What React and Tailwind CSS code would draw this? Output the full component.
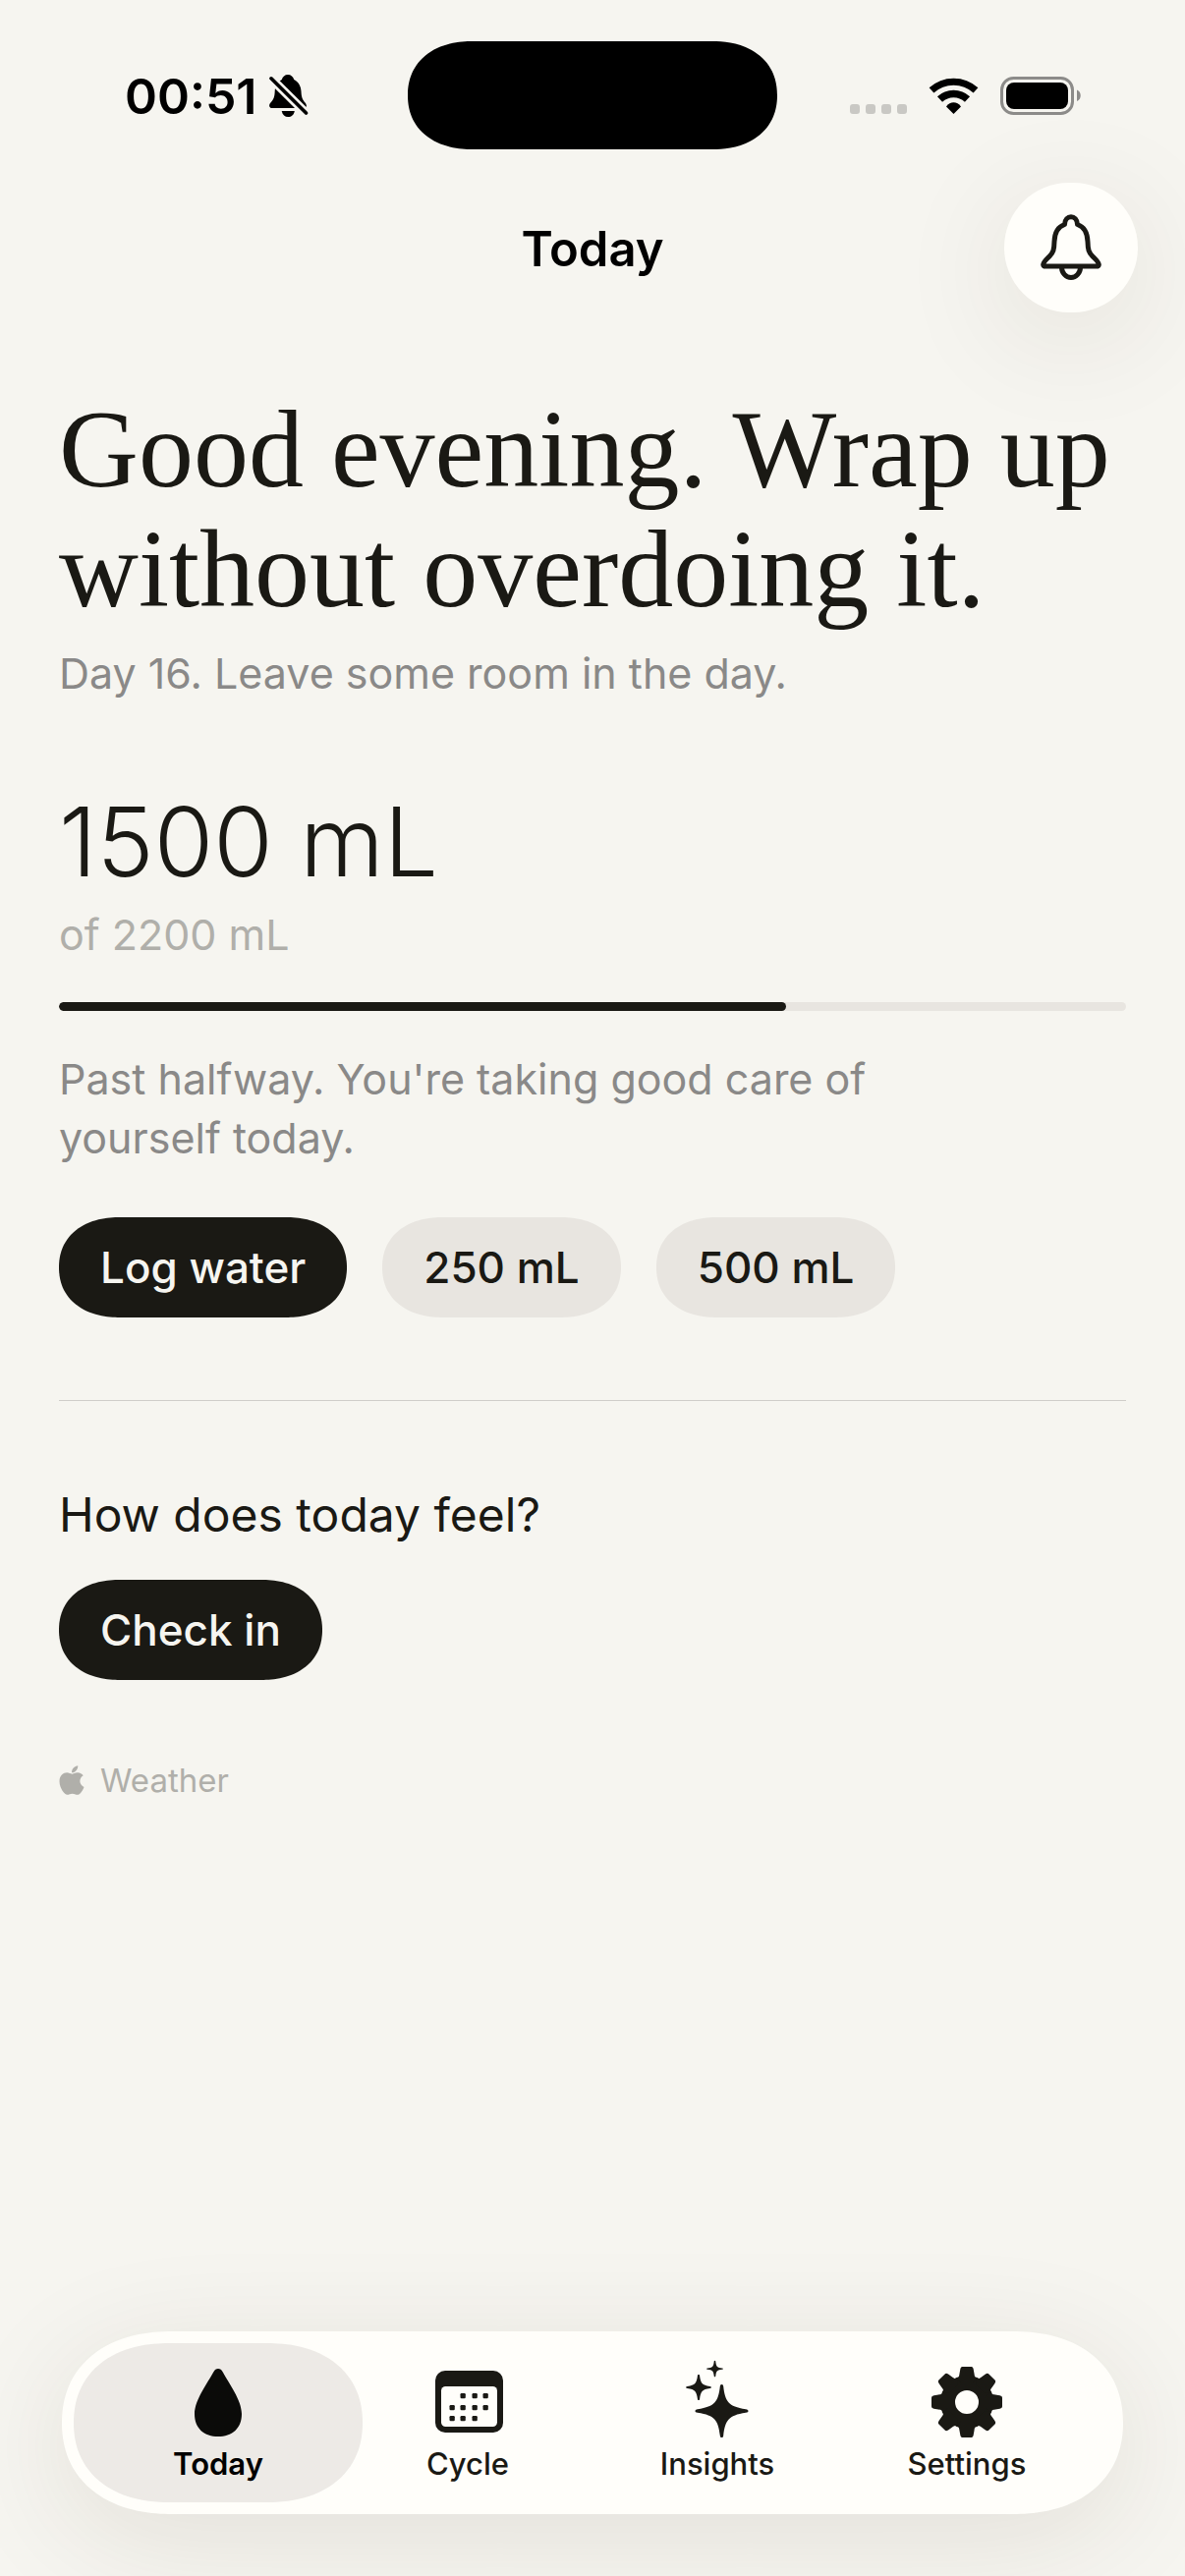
"use client";

import { useState } from "react";
import { FaApple } from "react-icons/fa";

const GOAL = 2200;

function BellSlashIcon() {
  return (
    <svg viewBox="0 0 40 44" className="h-11 w-10" aria-hidden="true">
      <path
        d="M19 0C22 0 24.5 2 25.2 5C30 7.500 32.300 12 32.500 17C32.700 23 34 25.500 36.500 28.500C38.500 31 38.500 34 35.500 34H3C0 34 -0.800 31 1.200 28.800C4.500 25 5.500 23 5.700 17C6 11 8.500 7.500 12.800 5C13.500 2 16 0 19 0Z"
        fill="#000"
      />
      <path d="M12.700 37H25.800C25 41 22.500 43 19.200 43C16 43 13.500 41 12.700 37Z" fill="#000" />
      <path d="M-2 0L42 43.500" stroke="#f6f5f0" strokeWidth="9" />
      <path d="M2 3.800L37.500 39" stroke="#000" strokeWidth="3.600" strokeLinecap="round" />
    </svg>
  );
}

function WifiIcon() {
  return (
    <svg viewBox="0 0 51 37" className="h-[37px] w-[51px]" fill="none" stroke="#000" aria-hidden="true">
      <path d="M3 12.900A33.300 33.300 0 0 1 48 12.900" strokeWidth="7" />
      <path d="M11.500 22A20.500 20.500 0 0 1 39.500 22" strokeWidth="7.500" />
      <path d="M25.500 37L18 29.400C22 24 29 24 33 29.400Z" fill="#000" stroke="none" />
    </svg>
  );
}

function BatteryIcon() {
  return (
    <svg viewBox="0 0 83 39" className="h-[39px] w-[83px]" aria-hidden="true">
      <rect x="1.500" y="1.500" width="72" height="36" rx="12" fill="none" stroke="#8c8b89" strokeWidth="3" />
      <rect x="6" y="6" width="63" height="27" rx="8" fill="#000" />
      <path d="M78 13.500C83 15.500 83 23 78 25Z" fill="#8c8b89" />
    </svg>
  );
}

function BellIcon() {
  return (
    <svg
      viewBox="0 0 64 70"
      className="h-[70px] w-16"
      fill="none"
      stroke="#1a1914"
      strokeWidth="5"
      strokeLinejoin="round"
      aria-hidden="true"
    >
      <path d="M25.500 11.500C25.800 1.200 38.200 1.200 38.500 11.500C46 14 48.700 20.500 49 29C49.200 37 50 40 54 44C57 47 60 49.500 60.300 52.300C60.400 53.500 59.500 54 58 54H6C4.500 54 3.600 53.500 3.700 52.300C4 49.500 7 47 10 44C14 40 14.800 37 15 29C15.300 20.500 18 14 25.500 11.500Z" />
      <path d="M22.500 55A9.500 10.500 0 0 0 41.500 55" />
    </svg>
  );
}

function DropIcon() {
  return (
    <svg viewBox="0 0 72 80" className="h-20 w-[72px]" aria-hidden="true">
      <path
        d="M36 9C38 9 39.500 10 40.500 12C47 24 60 41 60 55C60 70 50 78 36 78C22 78 12 70 12 55C12 41 25 24 31.500 12C32.500 10 34 9 36 9Z"
        fill="#0b0b09"
      />
    </svg>
  );
}

function CalendarIcon() {
  const dots = [
    [31, 36], [43, 36], [54, 36],
    [20, 48], [31, 48], [43, 48], [54, 48],
    [20, 59], [31, 59], [43, 59],
  ];
  return (
    <svg viewBox="0 0 72 80" className="h-20 w-[72px]" aria-hidden="true">
      <rect x="3" y="11" width="69" height="63" rx="10" fill="#1a1914" />
      <rect x="9" y="27" width="57" height="41" rx="4.500" fill="#fffefa" />
      {dots.map(([x, y]) => (
        <rect key={`${x}-${y}`} x={x - 2.5} y={y - 2} width="5.300" height="5.300" rx="1.200" fill="#1a1914" />
      ))}
    </svg>
  );
}

function SparklesIcon() {
  return (
    <svg viewBox="0 0 72 80" className="h-20 w-[72px]" fill="#1a1914" aria-hidden="true">
      <path d="M40.500 25C41.700 25 42 25.800 42.200 27C44 42 47 47.500 65 50.200C66.800 50.500 67.500 51 67.500 52C67.500 53 66.800 53.500 65 53.800C47 56.500 44 62 42.200 77C42 78.500 41.700 79 40.500 79C39.300 79 39 78.500 38.800 77C37 62 34 56.500 16 53.800C14.200 53.500 13.500 53 13.500 52C13.500 51 14.200 50.500 16 50.200C34 47.500 37 42 38.800 27C39 25.800 39.300 25 40.500 25Z" />
      <path d="M17 15C17.800 15 18 15.500 18.100 16.300C19 23.500 20.500 26 28.500 27C29.500 27.200 30 27.500 30 28C30 28.500 29.500 28.800 28.500 29C20.500 30 19 32.500 18.100 39.700C18 40.500 17.800 41 17 41C16.200 41 16 40.500 15.900 39.700C15 32.500 13.500 30 5.500 29C4.500 28.800 4 28.500 4 28C4 27.500 4.500 27.200 5.500 27C13.500 26 15 23.500 15.900 16.300C16 15.500 16.200 15 17 15Z" />
      <path d="M33.500 0.800C34.300 0.800 34.300 1.800 34.400 2.400C35 7 36 7.800 41 8.500C42.300 8.800 42.300 9.400 41 9.700C36 10.400 35 11.200 34.400 15.800C34.300 16.800 34 17.300 33.500 17.300C33 17.300 32.700 16.800 32.600 15.800C32 11.200 31 10.400 26 9.700C24.700 9.400 24.700 8.800 26 8.500C31 7.800 32 7 32.600 2.400C32.700 1.800 32.700 0.800 33.500 0.800Z" />
    </svg>
  );
}

function GearIcon() {
  const angles = [0, 45, 90, 135, 180, 225, 270, 315];
  return (
    <svg viewBox="0 0 72 80" className="h-20 w-[72px]" aria-hidden="true">
      <circle cx="36" cy="43" r="19.500" fill="none" stroke="#1a1914" strokeWidth="15" />
      {angles.map((angle) => (
        <path
          key={angle}
          d="M25.500 18.500C28 18 28 17 28.500 14L29.300 9.500C29.700 7.500 30.500 7 32 7H40C41.500 7 42.300 7.500 42.700 9.500L43.500 14C44 17 44 18 46.500 18.500L42 24H30Z"
          transform={`rotate(${angle} 36 43)`}
          fill="#1a1914"
        />
      ))}
    </svg>
  );
}

const tabs = [
  { name: "Today", icon: DropIcon },
  { name: "Cycle", icon: CalendarIcon },
  { name: "Insights", icon: SparklesIcon },
  { name: "Settings", icon: GearIcon },
];

function StatusBar() {
  return (
    <div className="grid grid-cols-[1fr_auto_1fr] items-center pt-[42px]">
      <div className="flex items-center gap-3 pt-0.5 pl-[127px]">
        <span className="text-[50px] leading-[52px] font-semibold text-black">00:51</span>
        <BellSlashIcon />
      </div>
      <div className="h-[110px] w-[376px] rounded-[66px/55px] bg-black [corner-shape:superellipse(1.15)]" />
      <div className="flex items-center justify-end gap-[22px] pr-[105px]">
        <div className="flex gap-1.5 pt-7">
          <i className="size-2.5 rounded-[3px] bg-[#c9c8c4]" />
          <i className="size-2.5 rounded-[3px] bg-[#c9c8c4]" />
          <i className="size-2.5 rounded-[3px] bg-[#c9c8c4]" />
          <i className="size-2.5 rounded-[3px] bg-[#c9c8c4]" />
        </div>
        <WifiIcon />
        <BatteryIcon />
      </div>
    </div>
  );
}

// pill button used for the water and check in actions
function PillButton({ dark, onClick, children }) {
  return (
    <button
      type="button"
      onClick={onClick}
      className={`rounded-[62px/51px] px-[42px] py-[21px] text-[44px] leading-[60px] font-medium [corner-shape:superellipse(1.15)] ${
        dark ? "bg-[#1a1914] text-[#f6f5f0]" : "bg-[#e8e5e0]"
      }`}
    >
      {children}
    </button>
  );
}

export default function App() {
  const [water, setWater] = useState(1500);
  const [activeTab, setActiveTab] = useState("Today");

  const addWater = (amount) => setWater((prev) => Math.min(prev + amount, GOAL));

  return (
    <div className="flex min-h-screen flex-col bg-[#f6f5f0] font-[Inter,sans-serif] text-[#1a1914]">
      <StatusBar />

      <header className="grid grid-cols-[1fr_auto_1fr] items-center px-12 pt-[34px]">
        <h2 className="col-start-2 pt-1 text-[49px] leading-[52px] font-semibold text-black">Today</h2>
        <button
          type="button"
          aria-label="Notifications"
          className="flex h-[132px] w-[136px] items-center justify-center justify-self-end rounded-full bg-[#fffefa] shadow-[0_24px_120px_rgba(60,40,20,0.10)]"
        >
          <BellIcon />
        </button>
      </header>

      <main className="flex-1 px-[60px] pt-[78px]">
        <h1 className="font-['Liberation_Serif',serif] text-[112px] leading-[122px]">
          Good evening. Wrap up without overdoing it.
        </h1>
        <p className="mt-[15px] text-[43px] leading-[60px] text-[#8a8988]">
          Day 16. Leave some room in the day.
        </p>

        <section className="mt-[82px]">
          <p className="text-[98px] leading-[120px] font-light">{water} mL</p>
          <p className="mt-1 text-[43px] leading-[60px] text-[#b0afaa]">of {GOAL} mL</p>
          <div className="mt-[39px] h-[9px] overflow-hidden rounded-full bg-[#e8e5e0]">
            <div
              className="h-full rounded-full bg-[#1a1914]"
              style={{ width: `${(water / GOAL) * 100}%` }}
            />
          </div>
          <p className="mt-[39px] max-w-[880px] text-[43px] leading-[60px] text-[#8a8988]">
            Past halfway. You're taking good care of yourself today.
          </p>
          <div className="mt-[51px] flex gap-9">
            <PillButton dark>Log water</PillButton>
            <PillButton onClick={() => addWater(250)}>250 mL</PillButton>
            <PillButton onClick={() => addWater(500)}>500 mL</PillButton>
          </div>
        </section>

        <section className="mt-[84px] border-t border-[#cfcdc9] pt-[82px]">
          <h3 className="mb-8 text-[48px] leading-[68px]">How does today feel?</h3>
          <PillButton dark>Check in</PillButton>
        </section>

        <p className="mt-[78px] flex items-center gap-3 text-[33px] leading-[48px] text-[#b0afaa]">
          <FaApple className="-ml-1 size-[34px]" />
          Weather
        </p>
      </main>

      <nav className="mx-[63px] mb-[63px] flex rounded-[112px/93px] bg-[#fffefa] px-8 py-3 shadow-[0_24px_120px_rgba(60,40,20,0.10)] [corner-shape:superellipse(1.15)]">
        {tabs.map(({ name, icon: Icon }) => (
          <button
            key={name}
            type="button"
            onClick={() => setActiveTab(name)}
            className={`-mx-5 flex flex-1 flex-col items-center gap-1.5 rounded-[97px/81px] pt-[17px] pb-[19px] text-[31px] leading-10 [corner-shape:superellipse(1.15)] ${
              activeTab === name ? "bg-[#edeae6] font-semibold text-black" : "font-medium"
            }`}
          >
            <Icon />
            {name}
          </button>
        ))}
      </nav>
    </div>
  );
}
